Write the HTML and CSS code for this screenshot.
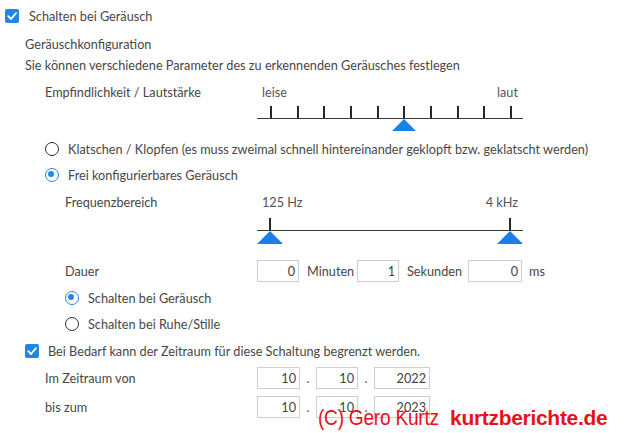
FILE: index.html
```html
<!DOCTYPE html>
<html lang="de">
<head>
<meta charset="utf-8">
<title>Schalten bei Geräusch</title>
<link rel="stylesheet" href="styles.css">
</head>
<body>
<div class="page">
  <div class="row r-main">
    <span class="cb"><svg viewBox="0 0 14 14" width="14" height="14"><path d="M3.2 7.2 L6 10 L11 4.2" fill="none" stroke="#fff" stroke-width="1.8" stroke-linecap="round" stroke-linejoin="round"/></svg></span>
    <span>Schalten bei Geräusch</span>
  </div>
  <div class="row r-title">Geräuschkonfiguration</div>
  <div class="row r-desc">Sie können verschiedene Parameter des zu erkennenden Geräusches festlegen</div>

  <div class="field f-sens">
    <div class="label">Empfindlichkeit / Lautstärke</div>
    <div class="slider">
      <div class="ends"><span>leise</span><span>laut</span></div>
      <div class="track">
        <div class="ticks">
          <span class="tick"></span><span class="tick"></span><span class="tick"></span><span class="tick"></span><span class="tick"></span>
          <span class="tick"></span><span class="tick"></span><span class="tick"></span><span class="tick"></span><span class="tick"></span>
        </div>
        <span class="thumb" style="left:135px"></span>
      </div>
    </div>
  </div>

  <div class="row r-radio">
    <span class="rb"></span>
    <span>Klatschen / Klopfen (es muss zweimal schnell hintereinander geklopft bzw. geklatscht werden)</span>
  </div>
  <div class="row r-radio">
    <span class="rb on"></span>
    <span>Frei konfigurierbares Geräusch</span>
  </div>

  <div class="field f-freq">
    <div class="label">Frequenzbereich</div>
    <div class="slider">
      <div class="ends"><span>125 Hz</span><span>4 kHz</span></div>
      <div class="track track-freq">
        <div class="ticks ticks-freq">
          <span class="tick"></span><span class="tick"></span>
        </div>
        <span class="thumb thumb-freq" style="left:0px"></span>
        <span class="thumb thumb-freq" style="left:240px"></span>
      </div>
    </div>
  </div>

  <div class="row r-dauer">
    <div class="label">Dauer</div>
    <span class="inp w42">0</span><span class="unit u-min">Minuten</span>
    <span class="inp w42">1</span><span class="unit u-sek">Sekunden</span>
    <span class="inp w54">0</span><span class="unit u-ms">ms</span>
  </div>

  <div class="row r-radio r-sub r-sub1">
    <span class="rb on"></span>
    <span>Schalten bei Geräusch</span>
  </div>
  <div class="row r-radio r-sub">
    <span class="rb"></span>
    <span>Schalten bei Ruhe/Stille</span>
  </div>

  <div class="row r-limit">
    <span class="cb"><svg viewBox="0 0 14 14" width="14" height="14"><path d="M3.2 7.2 L6 10 L11 4.2" fill="none" stroke="#fff" stroke-width="1.8" stroke-linecap="round" stroke-linejoin="round"/></svg></span>
    <span>Bei Bedarf kann der Zeitraum für diese Schaltung begrenzt werden.</span>
  </div>

  <div class="row r-date">
    <div class="label">Im Zeitraum von</div>
    <span class="inp w43">10</span><span class="dot">.</span>
    <span class="inp w42">10</span><span class="dot">.</span>
    <span class="inp w56">2022</span>
  </div>
  <div class="row r-date r-date2">
    <div class="label">bis zum</div>
    <span class="inp w43">10</span><span class="dot">.</span>
    <span class="inp w42">10</span><span class="dot">.</span>
    <span class="inp w56">2023</span>
  </div>

  <span class="wm wm-reg">(C) Gero Kurtz</span>
  <span class="wm wm-bold">kurtzberichte.de</span>
</div>
</body>
</html>
```

FILE: styles.css
```css
html, body {
  margin: 0;
  padding: 0;
  background: #fff;
}
.page {
  position: relative;
  width: 624px;
  height: 433px;
  overflow: hidden;
  font-family: "Lato", "Liberation Sans", sans-serif;
  font-size: 12.7px;
  color: #474747;
}
.row {
  display: flex;
  align-items: center;
  white-space: nowrap;
}
.cb {
  width: 14px;
  height: 14px;
  border-radius: 2px;
  background: #2486e4;
  display: flex;
  flex: none;
}
.r-main {
  height: 32px;
  padding-left: 5px;
  gap: 10px;
}
.r-title {
  height: 24px;
  padding-left: 25px;
}
.r-desc {
  height: 18px;
  padding-left: 25px;
}
.field {
  display: flex;
}
.f-sens {
  padding-left: 45px;
  margin-top: 6px;
  height: 56px;
}
.f-sens .label {
  width: 212px;
  height: 24px;
  display: flex;
  align-items: center;
}
.f-freq {
  padding-left: 65px;
  margin-top: 2px;
  height: 56px;
}
.f-freq .label {
  width: 192px;
  height: 24px;
  display: flex;
  align-items: center;
}
.slider {
  width: 266px;
}
.ends {
  height: 24px;
  display: flex;
  justify-content: space-between;
  align-items: center;
  padding: 0 5px;
  color: #555;
}
.track {
  position: relative;
  margin-top: 2px;
  border-bottom: 1.5px solid #3a3a3a;
}
.track-freq {
  margin-top: 4px;
}
.ticks {
  display: flex;
  justify-content: space-between;
  padding: 0 11px 0 13px;
  height: 12px;
}
.ticks-freq {
  padding: 0 12px 0 12px;
}
.tick {
  width: 2px;
  height: 12px;
  background: #2a2a2a;
}
.thumb {
  position: absolute;
  top: 13px;
  width: 0;
  height: 0;
  border-left: 12px solid transparent;
  border-right: 12px solid transparent;
  border-bottom: 12px solid #1a7fe6;
}
.thumb-freq {
  border-left-width: 13px;
  border-right-width: 13px;
  border-bottom-width: 13px;
}
.rb {
  width: 14px;
  height: 14px;
  box-sizing: border-box;
  border: 1.8px solid #2e2e2e;
  border-radius: 50%;
  flex: none;
  position: relative;
}
.rb.on {
  border-color: #2486e4;
  border-width: 1.6px;
}
.rb.on::after {
  content: "";
  position: absolute;
  left: 2.4px;
  top: 2.4px;
  width: 6px;
  height: 6px;
  border-radius: 50%;
  background: #2486e4;
}
.r-radio {
  height: 26px;
  padding-left: 45px;
  gap: 9px;
}
.r-sub {
  padding-left: 65px;
}
.r-sub1 {
  margin-top: 1px;
}
.r-dauer {
  height: 26px;
  padding-left: 65px;
  margin-top: 12px;
}
.r-dauer .label {
  width: 192px;
}
.inp {
  height: 22px;
  box-sizing: border-box;
  border: 1px solid #cfcfcf;
  background: #fff;
  display: flex;
  align-items: center;
  justify-content: flex-end;
  padding-right: 3px;
  color: #444;
  flex: none;
}
.w42 { width: 42px; }
.w43 { width: 43px; }
.w54 { width: 54px; }
.w56 { width: 56px; }
.unit {
  box-sizing: border-box;
  padding-left: 8px;
  flex: none;
}
.u-min { width: 58px; }
.u-sek { width: 69px; }
.u-ms { padding-left: 7px; }
.r-limit {
  height: 28px;
  padding-left: 25px;
  gap: 9px;
}
.r-date {
  height: 24px;
  padding-left: 45px;
  margin-top: 1px;
}
.r-date2 {
  margin-top: 5px;
}
.r-date .label {
  width: 212px;
}
.dot {
  width: 16px;
  text-align: center;
  flex: none;
  color: #555;
}
.wm {
  position: absolute;
  top: 405px;
  color: #e8101a;
  white-space: nowrap;
  line-height: 26px;
  font-family: "Liberation Sans", sans-serif;
}
.wm-reg {
  left: 318px;
  font-size: 22px;
  letter-spacing: -0.3px;
  transform: scaleX(0.87);
  transform-origin: left center;
}
.wm-bold {
  left: 450px;
  font-size: 21px;
  font-weight: bold;
  letter-spacing: -0.3px;
}
```
